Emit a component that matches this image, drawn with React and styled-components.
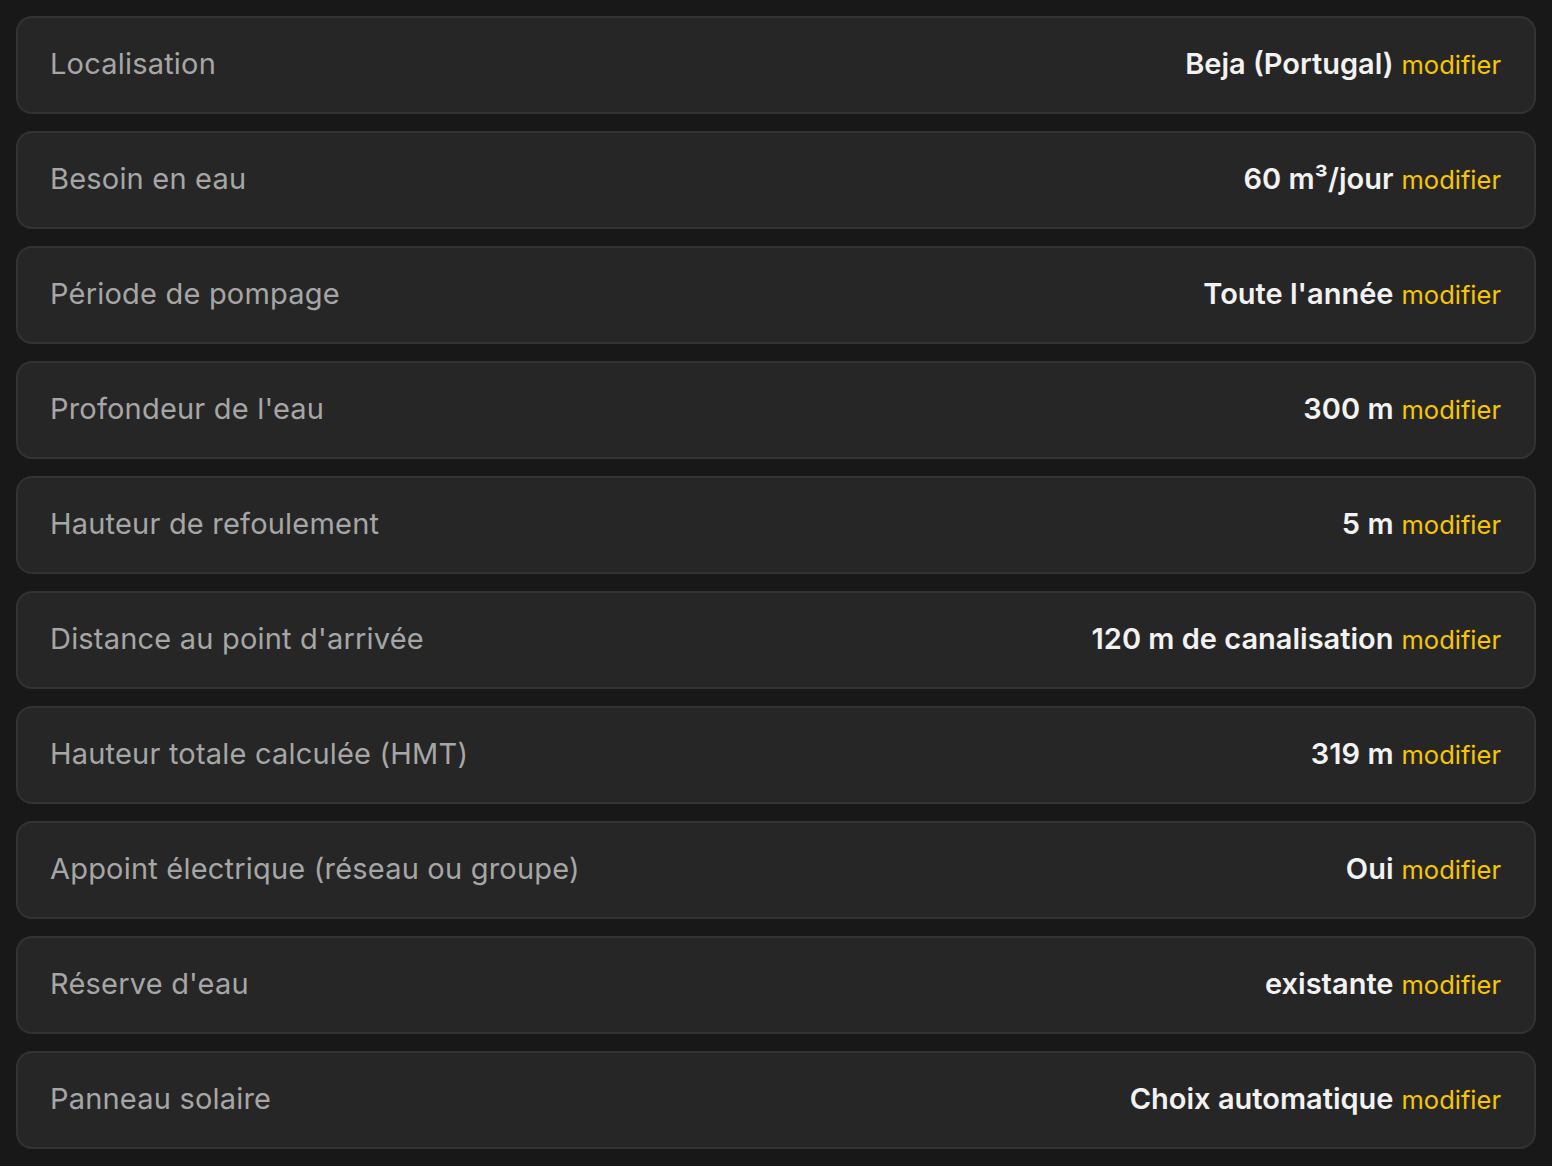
import React from 'react'
import styled, { createGlobalStyle } from 'styled-components'

const GlobalStyle = createGlobalStyle`
  html, body {
    margin: 0;
    padding: 0;
    background: #181818;
  }
  body {
    font-family: Inter, "Noto Sans", "Liberation Sans", sans-serif;
    -webkit-font-smoothing: antialiased;
  }
`

const List = styled.div`
  display: flex;
  flex-direction: column;
  gap: 17px;
  padding: 16px 16px;
`

const Row = styled.div`
  display: flex;
  align-items: center;
  justify-content: space-between;
  height: 98px;
  box-sizing: border-box;
  padding: 0 33px 4px 32px;
  background: #262626;
  border: 2px solid #333333;
  border-radius: 16px;
`

const Label = styled.span`
  font-size: 29px;
  color: #a6a6a6;
  letter-spacing: 0.2px;
`

const Value = styled.span`
  display: flex;
  align-items: baseline;
  gap: 8px;
  font-size: 29px;
  font-weight: 600;
  color: #f2f2f2;
`

const EditLink = styled.a`
  font-size: 25.5px;
  font-weight: 400;
  color: #f8c600;
  cursor: pointer;
  text-decoration: none;
`

const params = [
  ['Localisation', 'Beja (Portugal)'],
  ['Besoin en eau', '60 m³/jour'],
  ['Période de pompage', "Toute l'année"],
  ["Profondeur de l'eau", '300 m'],
  ['Hauteur de refoulement', '5 m'],
  ["Distance au point d'arrivée", '120 m de canalisation'],
  ['Hauteur totale calculée (HMT)', '319 m'],
  ['Appoint électrique (réseau ou groupe)', 'Oui'],
  ["Réserve d'eau", 'existante'],
  ['Panneau solaire', 'Choix automatique'],
]

export default function App() {
  return (
    <>
      <GlobalStyle />
      <List>
        {params.map(([label, value]) => (
          <Row key={label}>
            <Label>{label}</Label>
            <Value>
              {value}
              <EditLink>modifier</EditLink>
            </Value>
          </Row>
        ))}
      </List>
    </>
  )
}
